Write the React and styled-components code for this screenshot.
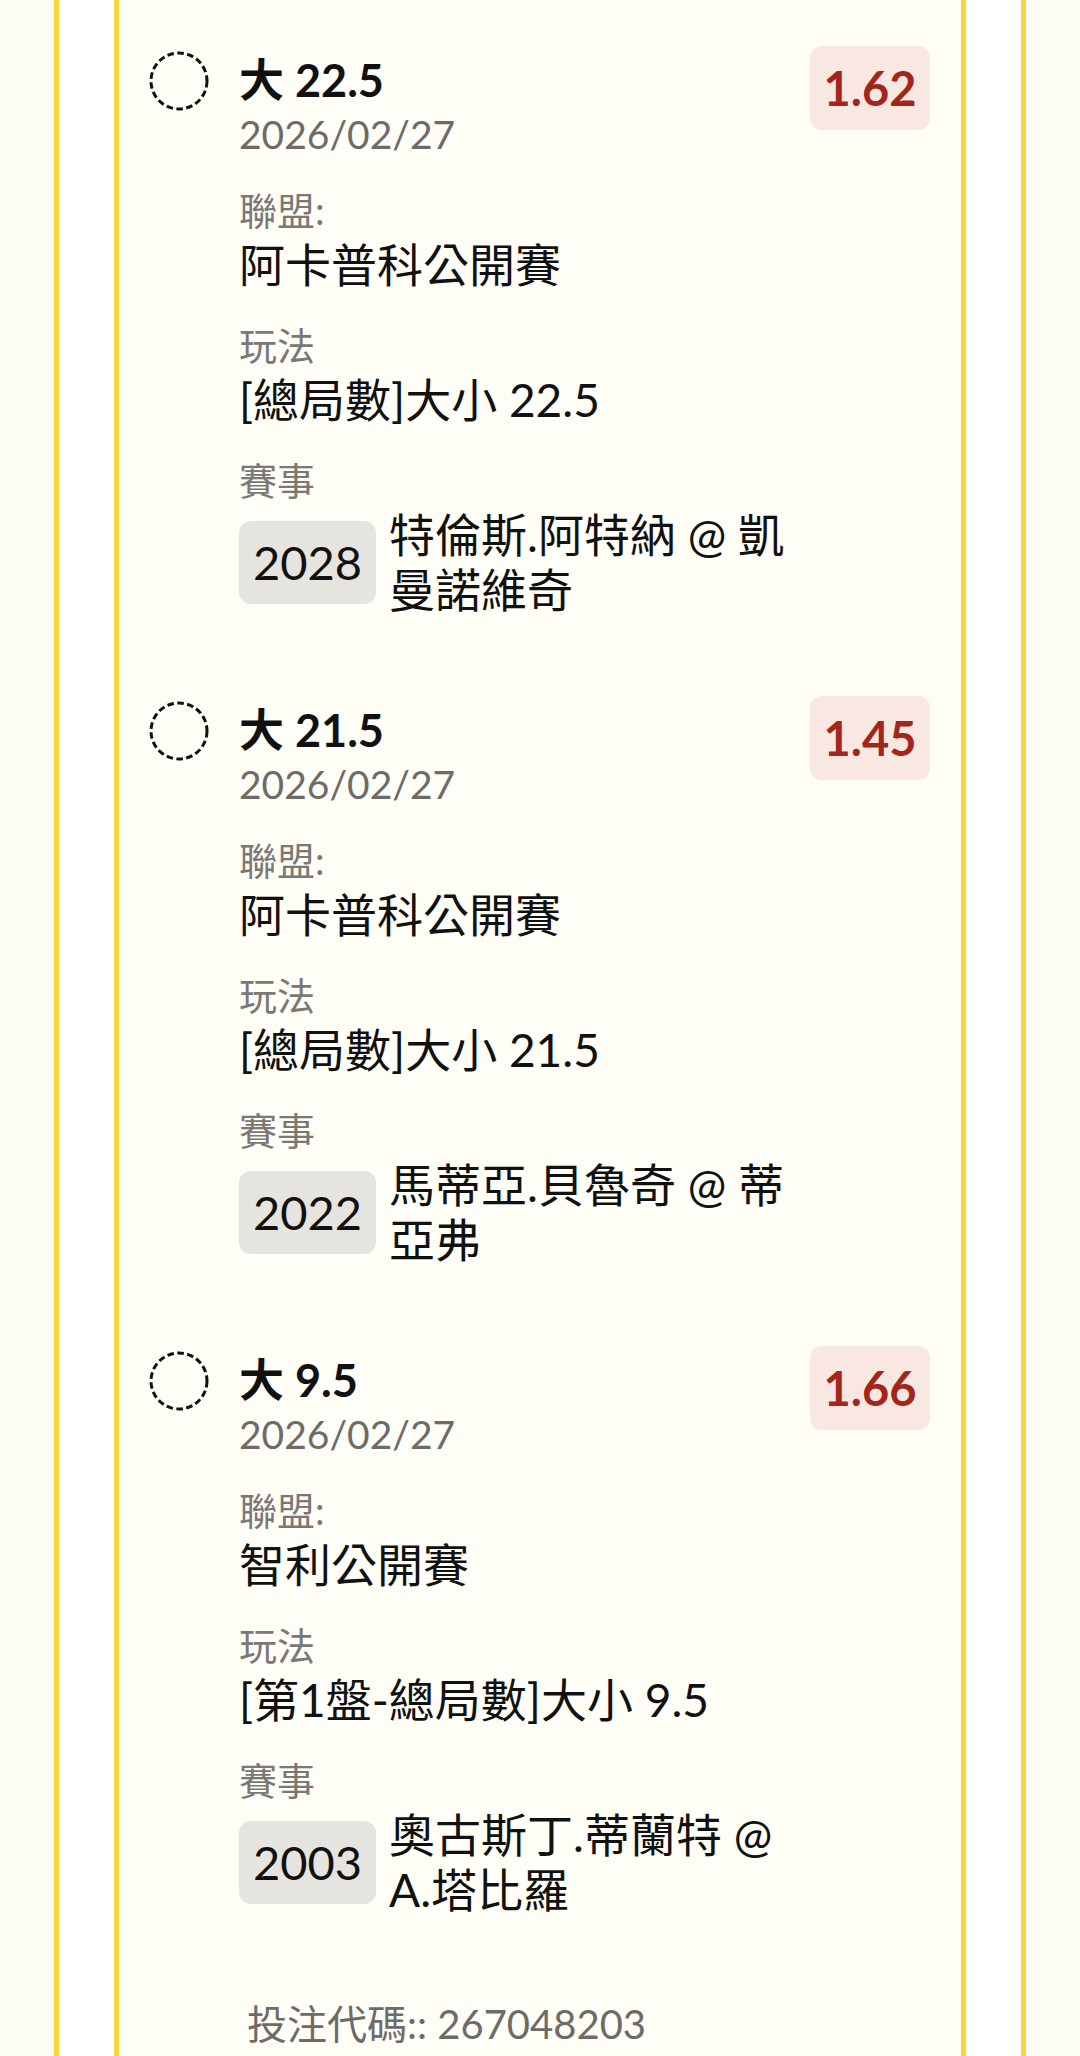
import React from 'react';
import styled, { createGlobalStyle } from 'styled-components';

const GlobalStyle = createGlobalStyle`
  html, body {
    margin: 0;
    padding: 0;
    background: #fdfcf4;
  }
  body {
    font-family: Lato, "Noto Sans CJK TC", "Noto Sans", sans-serif;
    color: #111;
    overflow: hidden;
  }
`;

const Frame = styled.div`
  margin: 0 54px;
  min-height: 100vh;
  background: #ffffff;
  border-left: 5px solid #f6d63b;
  border-right: 5px solid #f6d63b;
  padding: 0 55px;
`;

const Sheet = styled.div`
  min-height: 100vh;
  background: #fefdf6;
  border-left: 5px solid #f6d63b;
  border-right: 5px solid #f6d63b;
  padding: 46px 31px 0;
  box-sizing: border-box;
`;

const List = styled.div`
  display: flex;
  flex-direction: column;
  gap: 79px;
`;

const Item = styled.div`
  display: flex;
  align-items: flex-start;
`;

const Radio = styled.svg`
  flex: 0 0 60px;
  width: 60px;
  height: 60px;
  margin-top: 5px;
  margin-left: -1px;
  margin-right: 30px;
`;

const Body = styled.div`
  flex: 1;
  min-width: 0;
`;

const Title = styled.div`
  margin-top: 6px;
  font-size: 45px;
  font-weight: 700;
  line-height: 56px;
  color: #111;
`;

const DateText = styled.div`
  font-size: 39px;
  line-height: 52px;
  color: #6d6b68;
`;

const Field = styled.div`
  margin-top: 25px;
`;

const Label = styled.div`
  font-size: 38px;
  line-height: 50px;
  color: #7a7875;
`;

const Value = styled.div`
  font-size: 46px;
  line-height: 60px;
  color: #111;
`;

const MatchRow = styled.div`
  display: flex;
  align-items: center;
  margin-top: 2px;
`;

const Code = styled.div`
  flex: 0 0 auto;
  height: 83px;
  padding: 0 14px;
  box-sizing: border-box;
  display: flex;
  align-items: center;
  border-radius: 12px;
  background: #e6e4df;
  font-size: 47px;
  color: #111;
  margin-right: 13px;
`;

const Teams = styled.div`
  font-size: 46px;
  line-height: 55px;
  color: #111;
`;

const Odds = styled.div`
  flex: 0 0 120px;
  height: 84px;
  margin-left: 20px;
  border-radius: 12px;
  background: #f8e8e1;
  color: #a3261d;
  font-size: 47px;
  font-weight: 700;
  display: flex;
  align-items: center;
  justify-content: center;
`;

const Footer = styled.div`
  margin-top: 80px;
  padding-left: 97px;
  font-size: 40px;
  line-height: 54px;
  color: #6d6b68;
`;

const bets = [
  {
    pick: '大 22.5',
    date: '2026/02/27',
    league: '阿卡普科公開賽',
    market: '[總局數]大小 22.5',
    code: '2028',
    teams: '特倫斯.阿特納 @ 凱曼諾維奇',
    odds: '1.62',
  },
  {
    pick: '大 21.5',
    date: '2026/02/27',
    league: '阿卡普科公開賽',
    market: '[總局數]大小 21.5',
    code: '2022',
    teams: '馬蒂亞.貝魯奇 @ 蒂亞弗',
    odds: '1.45',
  },
  {
    pick: '大 9.5',
    date: '2026/02/27',
    league: '智利公開賽',
    market: '[第1盤-總局數]大小 9.5',
    code: '2003',
    teams: '奧古斯丁.蒂蘭特 @ A.塔比羅',
    odds: '1.66',
  },
];

const DashedCircle = () => (
  <Radio viewBox="0 0 60 60">
    <circle
      cx="30"
      cy="30"
      r="28"
      fill="none"
      stroke="#111"
      strokeWidth="3"
      strokeDasharray="6.6 3.4"
    />
  </Radio>
);

const BetItem = ({ bet }) => (
  <Item>
    <DashedCircle />
    <Body>
      <Title>{bet.pick}</Title>
      <DateText>{bet.date}</DateText>
      <Field>
        <Label>聯盟:</Label>
        <Value>{bet.league}</Value>
      </Field>
      <Field>
        <Label>玩法</Label>
        <Value>{bet.market}</Value>
      </Field>
      <Field>
        <Label>賽事</Label>
        <MatchRow>
          <Code>{bet.code}</Code>
          <Teams>{bet.teams}</Teams>
        </MatchRow>
      </Field>
    </Body>
    <Odds>{bet.odds}</Odds>
  </Item>
);

export default function App() {
  return (
    <>
      <GlobalStyle />
      <Frame>
        <Sheet>
          <List>
            {bets.map((bet) => (
              <BetItem key={bet.code} bet={bet} />
            ))}
          </List>
          <Footer>投注代碼:: 267048203</Footer>
        </Sheet>
      </Frame>
    </>
  );
}
